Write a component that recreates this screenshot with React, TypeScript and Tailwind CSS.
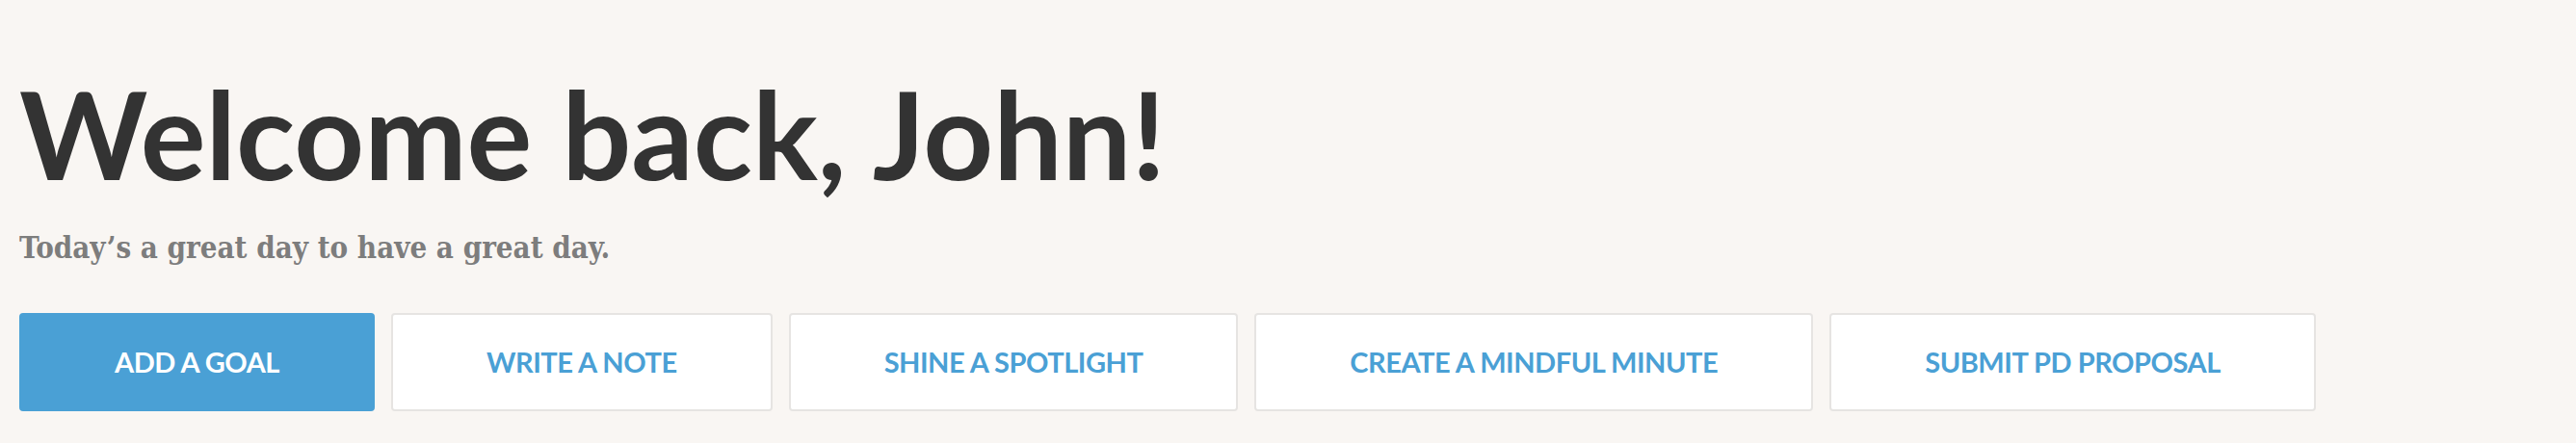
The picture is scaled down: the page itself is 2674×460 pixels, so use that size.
const ACTIONS = [
  { label: "Add a Goal", primary: true },
  { label: "Write a Note" },
  { label: "Shine a Spotlight" },
  { label: "Create a Mindful Minute" },
  { label: "Submit PD Proposal" },
];

function ActionButton({ label, primary }: { label: string; primary?: boolean }) {
  return (
    <button
      type="button"
      className={`h-[102px] px-[97px] rounded-[4px] border-2 font-['Lato','Open_Sans',sans-serif] text-[29px] font-bold uppercase tracking-[-0.016em] whitespace-nowrap ${
        primary
          ? "bg-[#4aa0d5] border-[#4aa0d5] text-white"
          : "bg-white border-[#e6e4e2] text-[#4aa0d5]"
      }`}
    >
      {label}
    </button>
  );
}

export default function App() {
  return (
    <div className="min-h-screen bg-[#f9f6f3] px-5 pt-[62px]">
      <h1 className="font-['Lato','Open_Sans',sans-serif] text-[127px] leading-[1.2] font-bold text-[#333333]">
        Welcome back, John!
      </h1>
      <p className="mt-[25px] font-['DejaVu_Serif_Condensed','DejaVu_Serif',serif] text-[31px] leading-[1.2] font-bold text-[#7d7d7d]">
        Today’s a great day to have a great day.
      </p>
      <div className="mt-[48px] flex gap-[17px]">
        {ACTIONS.map((a) => (
          <ActionButton key={a.label} label={a.label} primary={a.primary} />
        ))}
      </div>
    </div>
  );
}
